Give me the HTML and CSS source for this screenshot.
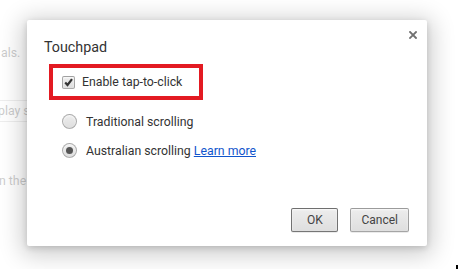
FILE: index.html
```html
<!DOCTYPE html>
<html>
<head>
<meta charset="utf-8">
<link rel="stylesheet" href="styles.css">
</head>
<body>
<div class="page">
  <div class="bg-line bg-first">als.</div>
  <div class="bg-field">play s</div>
  <div class="bg-line bg-last">n the</div>
</div>
<div class="overlay">
  <div class="dialog">
    <h1 class="title">Touchpad</h1>
    <button class="close" aria-label="Close">
      <svg width="8" height="8" viewBox="0 0 8 8"><path d="M1 1L7 7M7 1L1 7" stroke="#707070" stroke-width="1.8" stroke-linecap="square"/></svg>
    </button>
    <div class="highlight">
      <span class="checkbox">
        <svg width="11" height="11" viewBox="0 0 11 11"><path d="M2.2 5.6L4.5 8L9 2.2" fill="none" stroke="#333" stroke-width="2.2"/></svg>
      </span>
      <span class="label">Enable tap-to-click</span>
    </div>
    <div class="radios">
      <div class="radio-row"><span class="radio"></span><span class="label">Traditional scrolling</span></div>
      <div class="radio-row"><span class="radio checked"></span><span class="label">Australian scrolling <a class="link" href="#">Learn more</a></span></div>
    </div>
    <div class="footer">
      <button class="btn btn-ok">OK</button>
      <button class="btn">Cancel</button>
    </div>
  </div>
  <span class="mark"></span>
</div>
</body>
</html>
```

FILE: styles.css
```css
html, body {
  margin: 0;
  padding: 0;
  width: 458px;
  height: 269px;
  overflow: hidden;
  background: #ffffff;
  font-family: Roboto, "Noto Sans", sans-serif;
}
.page {
  position: relative;
  height: 269px;
  color: #333;
  font-size: 12.3px;
  line-height: 16px;
}
.bg-line {
  white-space: nowrap;
}
.bg-first {
  padding-top: 45px;
  padding-left: 1px;
}
.bg-field {
  margin-top: 39px;
  margin-left: -2px;
  width: 60px;
  height: 22px;
  box-sizing: border-box;
  border: 1px solid #bbb;
  border-left: none;
  line-height: 20px;
}
.bg-last {
  margin-top: 51px;
  margin-left: -1px;
}
.overlay {
  position: absolute;
  inset: 0;
  background: rgba(255, 255, 255, 0.75);
  padding: 20px 0 0 27px;
  box-sizing: border-box;
}
.dialog {
  position: relative;
  width: 400px;
  height: 226px;
  box-sizing: border-box;
  padding: 18px 18px 14px 17px;
  display: flex;
  flex-direction: column;
  background: #fff;
  border-radius: 2px;
  box-shadow: 0 4px 23px 5px rgba(0, 0, 0, 0.2), 0 2px 6px rgba(0, 0, 0, 0.15);
  color: #333;
}
.title {
  margin: 0;
  font-size: 14.3px;
  font-weight: normal;
  line-height: 18px;
  color: #333;
}
.close {
  position: absolute;
  top: 11px;
  right: 10px;
  width: 8px;
  height: 8px;
  padding: 0;
  border: none;
  background: none;
  display: flex;
}
.highlight {
  margin: 8px 0 0 5px;
  width: 154px;
  height: 36px;
  box-sizing: border-box;
  border: 4px solid #e31a22;
  display: flex;
  align-items: center;
  padding-left: 9px;
}
.checkbox {
  width: 13px;
  height: 13px;
  box-sizing: border-box;
  border: 1px solid rgba(0, 0, 0, 0.28);
  border-radius: 2px;
  background: linear-gradient(#ededed, #dedede);
  box-shadow: inset 0 1px 2px rgba(255, 255, 255, 0.75);
  display: flex;
  align-items: center;
  justify-content: center;
  margin-right: 7px;
}
.label {
  font-size: 12.3px;
  line-height: 16px;
  color: #333;
  white-space: nowrap;
}
.radios {
  margin: 7px 0 0 18px;
  display: flex;
  flex-direction: column;
}
.radio-row {
  height: 29px;
  display: flex;
  align-items: center;
}
.radio {
  width: 15px;
  height: 15px;
  box-sizing: border-box;
  border-radius: 50%;
  border: 1px solid rgba(0, 0, 0, 0.25);
  background: linear-gradient(#ededed, #dedede);
  box-shadow: inset 0 1px 2px rgba(255, 255, 255, 0.75);
  margin-right: 9px;
  display: flex;
  align-items: center;
  justify-content: center;
}
.radio.checked::after {
  content: "";
  width: 7px;
  height: 7px;
  border-radius: 50%;
  background: #555;
}
.link {
  color: #15c;
  text-decoration: underline;
}
.footer {
  margin-top: auto;
  display: flex;
  justify-content: flex-end;
  gap: 12px;
}
.btn {
  height: 24px;
  min-width: 47px;
  box-sizing: border-box;
  padding: 0 10px;
  font-family: Roboto, "Noto Sans", sans-serif;
  font-size: 12px;
  color: #444;
  border: 1px solid rgba(0, 0, 0, 0.3);
  border-radius: 2px;
  background: linear-gradient(#ededed, #dedede);
  box-shadow: 0 1px 0 rgba(0, 0, 0, 0.08), inset 0 1px 2px rgba(255, 255, 255, 0.75);
}
.btn-ok {
  border-color: rgba(0, 0, 0, 0.5);
}
.mark {
  position: absolute;
  right: 0;
  bottom: 0;
  width: 2px;
  height: 4px;
  background: #000;
}
```
